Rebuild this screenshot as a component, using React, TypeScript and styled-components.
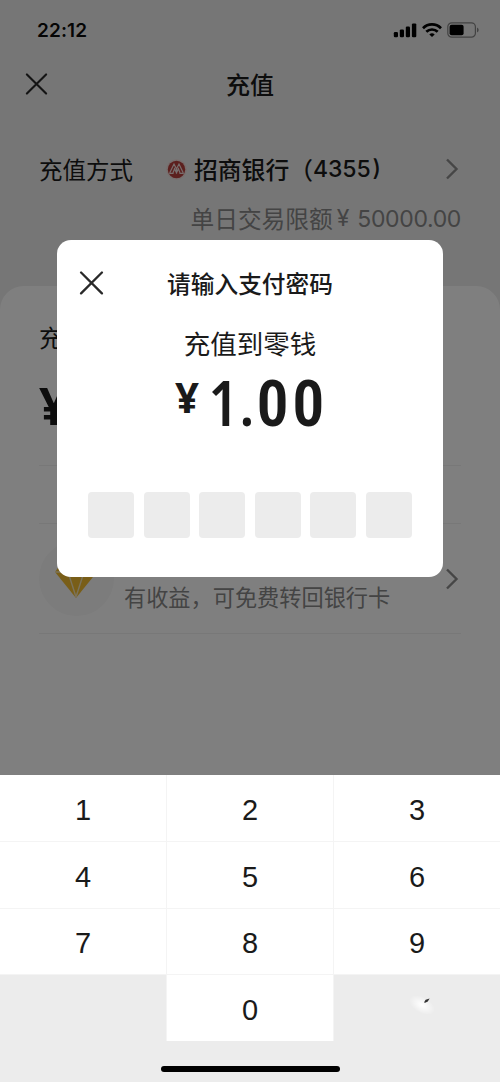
import React from 'react';
import styled, { createGlobalStyle } from 'styled-components';

const GlobalStyle = createGlobalStyle`
  *, *::before, *::after { box-sizing: border-box; }
  body { margin: 0; background: #ededed; }
`;

const cjk = `"Noto Sans CJK SC", sans-serif`;

const Screen = styled.div`
  position: relative;
  width: 500px;
  height: 1082px;
  overflow: hidden;
  display: flex;
  flex-direction: column;
  background: #ededed;
  font-family: Inter, ${cjk};
  color: #1a1a1a;
`;

const StatusBar = styled.header`
  display: flex;
  justify-content: space-between;
  align-items: center;
  height: 60px;
  padding: 0 20px 0 37px;
`;

const Clock = styled.span`
  margin-top: 2px;
  font-size: 19px;
  font-weight: 600;
  line-height: 24px;
  letter-spacing: 0.1px;
  color: #0a0a0a;
`;

const StatusIcons = styled.div`
  display: flex;
  align-items: center;
  gap: 5px;
`;

const NavBar = styled.nav`
  display: grid;
  grid-template-columns: 60px 1fr 60px;
  align-items: center;
  height: 48px;
`;

const NavClose = styled.div`
  display: flex;
  padding-left: 25px;
`;

const Title = styled.h1`
  margin: 0;
  text-align: center;
  font: 500 24px/36px ${cjk};
`;

const Method = styled.section`
  display: flex;
  flex-direction: column;
  height: 178px;
  padding: 43px 39px 0;
`;

const MethodRow = styled.div`
  display: flex;
  align-items: center;
  height: 36px;
`;

const Label = styled.span`
  font: 400 23.5px/36px ${cjk};
`;

const BankBadge = styled.span`
  display: flex;
  margin: 0 7px 0 33px;
`;

const Bank = styled.span`
  flex: 1;
  display: flex;
  font: 500 23.8px/35px ${cjk};
`;

const BankDigits = styled.span`
  font: 500 23px/36px Inter, sans-serif;
  letter-spacing: -0.1px;
`;

const CloseParen = styled.span`
  margin-left: 2px;
  font: 500 23px/34px Inter, sans-serif;
`;

const Limit = styled.div`
  display: flex;
  justify-content: flex-end;
  align-items: center;
  margin-top: 13px;
  height: 36px;
  color: #888;
  font: 400 23.7px/36px ${cjk};
`;

const LimitSign = styled.span`
  margin: 0 8px 0 4px;
  font: 400 23px/36px Inter, sans-serif;
`;

const LimitValue = styled.span`
  padding-top: 2px;
  font: 400 23px/36px Inter, sans-serif;
  letter-spacing: -0.35px;
`;

const Panel = styled.main`
  flex: 1;
  padding: 33px 39px 0;
  border-radius: 24px 24px 0 0;
  background: #fff;
`;

const AmountLabel = styled.div`
  height: 36px;
  font: 400 23.5px/36px ${cjk};
`;

const AmountField = styled.div`
  height: 111px;
  padding-top: 18px;
  border-bottom: 1px solid #f0f0f0;
  font: 700 52px/64px "Noto Sans", sans-serif;
`;

const NoteRow = styled.div`
  height: 58px;
  border-bottom: 1px solid #f0f0f0;
`;

const FundRow = styled.div`
  display: flex;
  align-items: center;
  height: 110px;
  border-bottom: 1px solid #f0f0f0;
`;

const GemBadge = styled.div`
  display: flex;
  align-items: center;
  justify-content: center;
  width: 75px;
  height: 75px;
  border-radius: 50%;
  background: #f8f8f8;
`;

const FundText = styled.div`
  flex: 1;
  padding: 35px 0 0 10px;
  color: #888;
  font: 400 22.2px/34px ${cjk};
`;

const Mask = styled.div`
  position: absolute;
  inset: 0;
  background: rgba(0, 0, 0, 0.5);
`;

const Dialog = styled.section`
  position: absolute;
  left: 57px;
  top: 240px;
  width: 386px;
  height: 336.5px;
  border-radius: 14px;
  background: #fff;
`;

const DialogHead = styled.div`
  display: grid;
  grid-template-columns: 60px 1fr 60px;
  align-items: center;
  height: 86px;
  font: 500 23.7px/36px ${cjk};
  text-align: center;
`;

const DialogClose = styled.div`
  display: flex;
  padding-left: 22px;
`;

const Purpose = styled.div`
  height: 36px;
  text-align: center;
  font: 400 26.5px/34px ${cjk};
`;

const Sum = styled.div`
  display: flex;
  align-items: flex-start;
  height: 130px;
  padding: 4px 0 0 118px;
`;

const Currency = styled.span`
  width: 33.5px;
  font: 700 42px/62px "Noto Sans", sans-serif;
`;

const Value = styled.span`
  font: condensed 650 64px/72px "Open Sans", sans-serif;
  letter-spacing: 2px;
`;

const Cents = styled.span`
  font: condensed 650 64px/72px Roboto, sans-serif;
  letter-spacing: 3.6px;
`;

const Pins = styled.div`
  display: flex;
  justify-content: center;
  gap: 9.6px;
`;

const Pin = styled.span`
  width: 46px;
  height: 46px;
  border-radius: 4px;
  background: #ececec;
`;

const Keyboard = styled.footer`
  position: absolute;
  left: 0;
  right: 0;
  bottom: 0;
  height: 307px;
  display: flex;
  flex-direction: column;
  align-items: center;
  background: #ececec;
`;

const Keys = styled.div`
  display: grid;
  grid-template-columns: 166px 166px 166px;
  grid-template-rows: 66px 66px 65px 66px;
  gap: 1px;
  width: 500px;
  background: #f4f4f4;
`;

const Key = styled.div<{ $blank?: boolean }>`
  display: flex;
  align-items: center;
  justify-content: center;
  padding-top: 3px;
  background: ${(p) => (p.$blank ? '#ececec' : '#fff')};
  font: 400 29px/34px "Liberation Sans", sans-serif;
`;

const HomeBar = styled.div`
  width: 179px;
  height: 6px;
  margin-top: 25px;
  border-radius: 3px;
  background: #000;
`;

const Cross = ({ size }: { size: number }) => (
  <svg width={size} height={size} viewBox="0 0 24 24" fill="none" stroke="#292929" strokeWidth="2.2" strokeLinecap="round">
    <path d="M2 1.5 22 21.5M22 1.5 2 21.5" />
  </svg>
);

const Chevron = () => (
  <svg width="17" height="22" viewBox="0 0 17 22" fill="none" stroke="#8c8c8c" strokeWidth="2.4">
    <path d="M3 1.5 12.5 11 3 20.5" />
  </svg>
);

const Signal = () => (
  <svg width="24" height="15" viewBox="0 0 24 15" fill="#000">
    <rect x="0.8" y="9" width="4.2" height="5.2" rx="1.2" />
    <rect x="6.8" y="6.4" width="4.2" height="7.8" rx="1.2" />
    <rect x="12.8" y="3.6" width="4.2" height="10.6" rx="1.2" />
    <rect x="18.9" y="0.4" width="4.4" height="13.8" rx="1.2" />
  </svg>
);

const Wifi = () => (
  <svg width="20" height="15" viewBox="0 0 20 15" fill="none" stroke="#000" strokeWidth="2.7">
    <path d="M1 5.2C6 .2 14 .2 19 5.2" />
    <path d="M4.3 8.8C7.5 5.7 12.5 5.7 15.7 8.8" />
    <path d="M10 14 7.3 11.4Q10 9.2 12.7 11.4Z" fill="#000" stroke="none" />
  </svg>
);

const Battery = () => (
  <svg width="33" height="16" viewBox="0 0 33 16">
    <rect x="0.8" y="0.8" width="27.6" height="14.4" rx="4" fill="none" stroke="#858585" strokeWidth="1.2" />
    <rect x="2.6" y="2.8" width="14" height="10.4" rx="2" fill="#000" />
    <path d="M30 5.4q1.7.8 1.7 2.6T30 10.6Z" fill="#858585" />
  </svg>
);

const BankLogo = () => (
  <svg width="21" height="21" viewBox="0 0 21 21">
    <circle cx="10.5" cy="10.5" r="10.3" fill="#f0dddb" />
    <circle cx="10.5" cy="10.5" r="8.7" fill="#b8403c" />
    <path d="M3.8 13.8 8 5l2.5 5L13 5l4.2 8.8M7 13.8l1.6-4 1.9 4 1.9-4 1.6 4M3.2 14.4h4.4m2.9-4v4m2.9 0h4.4" fill="none" stroke="#f0dddb" strokeWidth="1.2" />
  </svg>
);

const Gem = () => (
  <svg width="44" height="38" viewBox="0 0 44 38">
    <path d="M8 1h26l8 11-21 26L0 12Z" fill="#f2bd30" />
    <path d="M0 12h42M13 12l8 25 8-25-8-11Z" fill="none" stroke="#f6e6b8" strokeWidth="1.4" />
  </svg>
);

const DeleteGlint = () => (
  <svg width="60" height="40" viewBox="0 0 60 40">
    <defs>
      <radialGradient id="glint">
        <stop offset="0" stopColor="#fff" />
        <stop offset="1" stopColor="#fff" stopOpacity="0" />
      </radialGradient>
    </defs>
    <ellipse cx="35" cy="15" rx="14" ry="8" fill="url(#glint)" transform="rotate(30 35 15)" />
    <path d="m37 12.6 1.6-2.8 4-1.2-1.8 2.8-2.6 1.4Z" fill="#333" />
  </svg>
);

export default function App() {
  return (
    <>
      <GlobalStyle />
      <Screen>
        <StatusBar>
          <Clock>22:12</Clock>
          <StatusIcons>
            <Signal />
            <Wifi />
            <Battery />
          </StatusIcons>
        </StatusBar>
        <NavBar>
          <NavClose><Cross size={23} /></NavClose>
          <Title>充值</Title>
        </NavBar>
        <Method>
          <MethodRow>
            <Label>充值方式</Label>
            <BankBadge><BankLogo /></BankBadge>
            <Bank>招商银行（<BankDigits>4355</BankDigits><CloseParen>)</CloseParen></Bank>
            <Chevron />
          </MethodRow>
          <Limit>
            单日交易限额
            <LimitSign>¥</LimitSign>
            <LimitValue>50000.00</LimitValue>
          </Limit>
        </Method>
        <Panel>
          <AmountLabel>充值金额</AmountLabel>
          <AmountField>¥</AmountField>
          <NoteRow />
          <FundRow>
            <GemBadge><Gem /></GemBadge>
            <FundText>有收益，可免费转回银行卡</FundText>
            <Chevron />
          </FundRow>
        </Panel>
        <Mask />
        <Dialog>
          <DialogHead>
            <DialogClose><Cross size={25} /></DialogClose>
            请输入支付密码
          </DialogHead>
          <Purpose>充值到零钱</Purpose>
          <Sum>
            <Currency>¥</Currency>
            <Value>1.<Cents>00</Cents></Value>
          </Sum>
          <Pins>
            {[0, 1, 2, 3, 4, 5].map((i) => <Pin key={i} />)}
          </Pins>
        </Dialog>
        <Keyboard>
          <Keys>
            {['1', '2', '3', '4', '5', '6', '7', '8', '9'].map((n) => <Key key={n}>{n}</Key>)}
            <Key $blank />
            <Key>0</Key>
            <Key $blank><DeleteGlint /></Key>
          </Keys>
          <HomeBar />
        </Keyboard>
      </Screen>
    </>
  );
}
